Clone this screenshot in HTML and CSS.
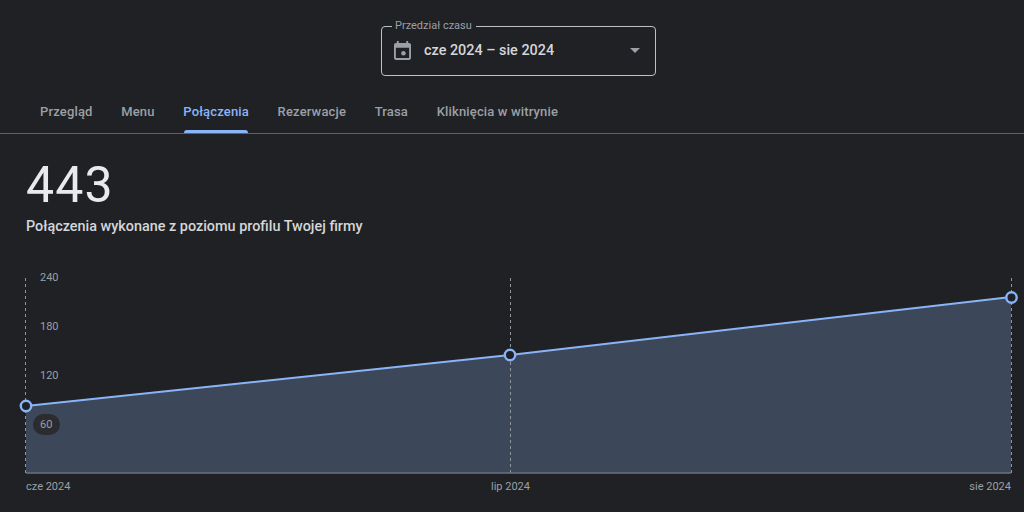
FILE: index.html
```html
<!DOCTYPE html>
<html lang="pl">
<head>
  <meta charset="UTF-8" />
  <title>Połączenia</title>
  <link rel="stylesheet" href="styles.css">
</head>
<body>
  <div class="range-row">
    <fieldset class="range">
      <legend>Przedział czasu</legend>
      <svg class="range-icon" viewBox="3 2 18 20" width="17" height="19">
        <path d="M19 4h-1V2h-2v2H8V2H6v2H5c-1.1 0-2 .9-2 2v14c0 1.1.9 2 2 2h14c1.1 0 2-.9 2-2V6c0-1.1-.9-2-2-2zm0 16H5V9h14v11z"/>
        <circle cx="13" cy="15" r="2.4"/>
      </svg>
      <span class="range-value">cze 2024 – sie 2024</span>
      <span class="range-arrow"></span>
    </fieldset>
  </div>

  <nav class="tabs">
    <a class="tab">Przegląd</a>
    <a class="tab">Menu</a>
    <a class="tab active">Połączenia</a>
    <a class="tab">Rezerwacje</a>
    <a class="tab">Trasa</a>
    <a class="tab">Kliknięcia w witrynie</a>
  </nav>

  <section class="summary">
    <div class="total">443</div>
    <div class="caption">Połączenia wykonane z poziomu profilu Twojej firmy</div>
  </section>

  <svg class="chart" viewBox="0 0 1024 242" width="1024" height="242">
    <!-- y = screen y - 270 -->
    <polygon class="area" points="26,136 510,85 1011,27 1011,203 26,203" />
    <line class="grid" x1="25.5" y1="8" x2="25.5" y2="203" />
    <line class="grid" x1="510.5" y1="8" x2="510.5" y2="203" />
    <line class="grid" x1="1011.5" y1="8" x2="1011.5" y2="203" />
    <line class="base" x1="26" y1="203" x2="1011" y2="203" />
    <polyline class="trend" points="26,136 510,85 1011,27" />
    <circle class="dot" cx="26" cy="136" r="5.2" />
    <circle class="dot" cx="510" cy="85" r="5.2" />
    <circle class="dot" cx="1011.5" cy="27.5" r="5.2" />
    <text class="tick" x="40" y="10.5">240</text>
    <text class="tick" x="40" y="59.5">180</text>
    <text class="tick" x="40" y="108.5">120</text>
    <rect class="pill" x="33" y="144" width="27" height="21" rx="10.5" />
    <text class="tick" x="40" y="158">60</text>
    <text class="tick" x="26" y="220">cze 2024</text>
    <text class="tick" x="510.5" y="220" text-anchor="middle">lip 2024</text>
    <text class="tick" x="1011" y="220" text-anchor="end">sie 2024</text>
  </svg>
</body>
</html>
```

FILE: styles.css
```css
* {
  box-sizing: border-box;
}

html, body {
  height: 512px;
  overflow: hidden;
}

body {
  margin: 0;
  background-color: #202124;
  font-family: Roboto, "Liberation Sans", sans-serif;
  color: #e8eaed;
}

.range-row {
  display: flex;
  justify-content: center;
  padding: 19px 0 0 13px;
}

.range {
  display: flex;
  align-items: center;
  width: 275px;
  height: 57px;
  margin: 0;
  padding: 0 15px 8px 12px;
  border: 1px solid #bdc1c6;
  border-radius: 4px;
}

.range legend {
  margin-left: -2px;
  padding: 0 4px 0 3px;
  font-size: 11px;
  line-height: 14px;
  color: #9aa0a6;
}

.range-icon {
  fill: #9aa0a6;
  margin-right: 13px;
}

.range-value {
  flex: 1;
  font-size: 14.4px;
  font-weight: 500;
  color: #d4d6da;
}

.range-arrow {
  width: 0;
  height: 0;
  border-left: 5px solid transparent;
  border-right: 5px solid transparent;
  border-top: 5px solid #9aa0a6;
}

.tabs {
  display: flex;
  gap: 28.7px;
  height: 58px;
  padding: 0 40px;
  border-bottom: 1px solid #5f6368;
}

.tab {
  position: relative;
  padding-top: 28px;
  font-size: 13px;
  font-weight: 500;
  letter-spacing: 0.15px;
  color: #9aa0a6;
}

.tab.active {
  color: #8ab4f8;
}

.tab.active::after {
  content: "";
  position: absolute;
  left: 1px;
  right: 1px;
  bottom: 0;
  height: 3px;
  border-radius: 3px 3px 0 0;
  background-color: #8ab4f8;
}

.summary {
  padding: 23px 26px 0;
}

.total {
  font-size: 50px;
  line-height: 56px;
  letter-spacing: 1.2px;
  color: #e8eaed;
}

.caption {
  margin-top: 4px;
  font-size: 14.4px;
  line-height: 20px;
  font-weight: 500;
  color: #d4d6da;
}

.chart {
  display: block;
  margin-top: 33px;
}

.area {
  fill: #3c4859;
}

.grid {
  stroke: #8f959b;
  stroke-width: 1;
  stroke-dasharray: 3 3;
}

.base {
  stroke: #6b7280;
  stroke-width: 1.5;
}

.trend {
  fill: none;
  stroke: #8ab4f8;
  stroke-width: 2;
}

.dot {
  fill: #202124;
  stroke: #8ab4f8;
  stroke-width: 2.4;
}

.pill {
  fill: #2b2c2f;
}

.tick {
  font-size: 11px;
  fill: #9aa0a6;
}
```
